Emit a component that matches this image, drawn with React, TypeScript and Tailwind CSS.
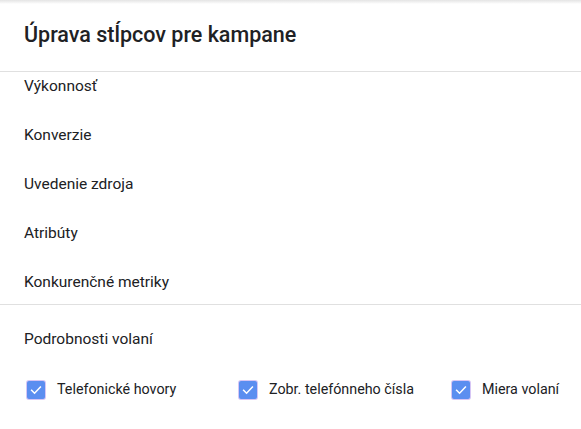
import React from "react";

const Check = () => (
  <span className="flex h-[18px] w-[18px] shrink-0 items-center justify-center rounded-[2px] bg-[#5b8ef0] shadow-[0_0_0_1px_#d6c6f5]">
    <svg width="14" height="14" viewBox="0 0 24 24" fill="none">
      <path d="M4.5 12.5l5 5L19.5 7" stroke="white" strokeWidth="2.6" strokeLinecap="square" />
    </svg>
  </span>
);

export default function App() {
  const items = ["Výkonnosť", "Konverzie", "Uvedenie zdroja", "Atribúty", "Konkurenčné metriky"];
  const checks = ["Telefonické hovory", "Zobr. telefónneho čísla", "Miera volaní"];
  return (
    <div className="relative h-[429px] w-[581px] overflow-hidden bg-white text-[#202124]" style={{ fontFamily: "Roboto, 'Noto Sans', sans-serif" }}>
      <div className="pointer-events-none absolute left-0 right-0 top-0 h-[4px] bg-gradient-to-b from-[#e4e4e4] to-white" />
      <div className="flex h-[72px] items-center border-b border-[#e0e0e0] px-[24px] pb-[2px]">
        <h1 className="text-[21.5px] font-medium leading-none text-[#202124]">Úprava stĺpcov pre kampane</h1>
      </div>
      <div className="h-[233px] overflow-hidden border-b border-[#e0e0e0]">
        <div className="-mt-[10px]">
          {items.map((t) => (
            <div key={t} className="flex h-[49px] items-center px-[24px] text-[15.5px] text-[#202124]">
              {t}
            </div>
          ))}
        </div>
      </div>
      <div className="flex h-[68px] items-center px-[24px] pt-[2px] text-[15.5px]">Podrobnosti volaní</div>
      <div className="grid grid-cols-[212px_213px_1fr] px-[27px]">
        {checks.map((c) => (
          <div key={c} className="flex h-[34px] items-center gap-[12px] whitespace-nowrap text-[14.3px]">
            <Check />
            <span>{c}</span>
          </div>
        ))}
      </div>
    </div>
  );
}
